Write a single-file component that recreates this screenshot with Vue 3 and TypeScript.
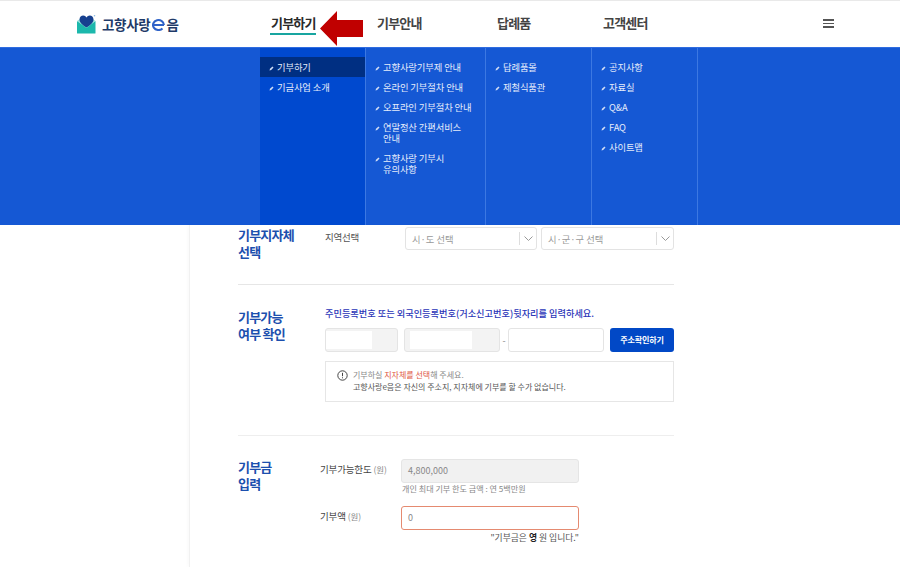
<script setup lang="ts">
const columns: { dark?: boolean; items: { label: string; active?: boolean }[] }[] = [
  { dark: true, items: [{ label: '기부하기', active: true }, { label: '기금사업 소개' }] },
  { items: [
    { label: '고향사랑기부제 안내' },
    { label: '온라인 기부절차 안내' },
    { label: '오프라인 기부절차 안내' },
    { label: '연말정산 간편서비스\n안내' },
    { label: '고향사랑 기부시\n유의사항' },
  ] },
  { items: [{ label: '답례품몰' }, { label: '제철식품관' }] },
  { items: [{ label: '공지사항' }, { label: '자료실' }, { label: 'Q&A' }, { label: 'FAQ' }, { label: '사이트맵' }] },
]
const nav = ['기부하기', '기부안내', '답례품', '고객센터']
</script>

<template>
  <div class="page">
    <header class="top">
      <a class="logo">
        <svg width="20" height="20" viewBox="0 0 20 20">
          <path d="M0 7 L9.500 13 L18.500 7 V19 Q18.500 19.500 18 19.500 H0.500 Q0 19.500 0 19 Z" fill="#1cb8ac" />
          <path d="M0 7 L3 5 H15.500 L18.500 7 L9.500 14 Z" fill="#8fe0d8" />
          <path d="M9.500 13.500 C5 10.500 2.500 8.500 2.500 5.500 C2.500 3 4.300 1.500 6.200 1.500 C7.600 1.500 8.800 2.300 9.500 3.500 C10.200 2.300 11.400 1.500 12.800 1.500 C14.700 1.500 16.500 3 16.500 5.500 C16.500 8.500 14 10.500 9.500 13.500 Z" fill="#17408f" />
          <circle cx="17.500" cy="1.800" r="0.800" fill="#8ab8e0" />
        </svg>
        <span class="logo-text">고향사랑</span>
        <svg class="logo-e" width="13" height="12" viewBox="0 0 13 12">
          <path d="M2 6 H12 M12 6 A5.500 5 0 1 0 10.500 9.500" fill="none" stroke="#2f62c8" stroke-width="2" />
        </svg>
        <span class="logo-text">음</span>
      </a>
      <span v-for="(n, i) in nav" :key="n" class="nav-cell" :class="{ first: i === 0 }">
        <span class="nav-item" :class="{ current: i === 0 }">{{ n }}</span>
      </span>
      <div class="burger-cell">
        <span class="burger"><i></i><i></i><i></i></span>
      </div>
      <svg class="arrow" width="44" height="36" viewBox="0 0 44 36">
        <path d="M0 17.500 L17 0 V9 H43 V26 H17 V35 Z" fill="#c00000" />
      </svg>
    </header>

    <nav class="mega">
      <div class="mega-spacer"></div>
      <ul v-for="(col, i) in columns" :key="i" class="mega-col" :class="{ dark: col.dark }">
        <li v-for="it in col.items" :key="it.label" class="mega-item" :class="{ active: it.active }">
          <svg class="tick" width="5" height="5" viewBox="0 0 5 5">
            <path d="M0.500 4.500 L1 2.800 L3.500 0.500 L4.500 1.500 L2.200 4 Z" fill="#cfdcf5" />
          </svg>
          <span class="mega-label">{{ it.label }}</span>
        </li>
      </ul>
      <div class="mega-spacer"></div>
    </nav>

    <main class="card">
      <section class="sec sec-region">
        <h2>기부지자체<br />선택</h2>
        <div class="sec-body region">
          <span class="region-label">지역선택</span>
          <div class="select s1">
            <span>시·도 선택</span>
            <b class="caret"><svg width="9" height="5" viewBox="0 0 9 5"><path d="M0.500 0.500 L4.500 4.500 L8.500 0.500" fill="none" stroke="#999" /></svg></b>
          </div>
          <div class="select s2">
            <span>시·군·구 선택</span>
            <b class="caret"><svg width="9" height="5" viewBox="0 0 9 5"><path d="M0.500 0.500 L4.500 4.500 L8.500 0.500" fill="none" stroke="#999" /></svg></b>
          </div>
        </div>
      </section>

      <section class="sec sec-check">
        <h2>기부가능<br />여부 확인</h2>
        <div class="sec-body">
          <p class="lead">주민등록번호 또는 외국인등록번호(거소신고번호)뒷자리를 입력하세요.</p>
          <div class="id-row">
            <div class="masked m1"><i></i></div>
            <div class="masked m2"><i></i></div>
            <span class="dash">-</span>
            <div class="plain"></div>
            <button class="confirm">주소확인하기</button>
          </div>
          <div class="note">
            <svg width="11" height="11" viewBox="0 0 11 11">
              <circle cx="5.500" cy="5.500" r="4.700" fill="none" stroke="#444" stroke-width="1" />
              <path d="M5.500 2.800 V6.200 M5.500 7.300 V8.300" stroke="#444" stroke-width="1" />
            </svg>
            <p>기부하실 <em>지자체를 선택</em>해 주세요.<br /><span>고향사랑e음은 자신의 주소지, 지자체에 기부를 할 수가 없습니다.</span></p>
          </div>
        </div>
      </section>

      <section class="sec sec-amount">
        <h2>기부금<br />입력</h2>
        <div class="amount">
          <div class="amount-row">
            <label>기부가능한도 <small>(원)</small></label>
            <div class="amount-field">
              <div class="input readonly">4,800,000</div>
              <p class="hint">개인 최대 기부 한도 금액 : 연 5백만원</p>
            </div>
          </div>
          <div class="amount-row second">
            <label>기부액 <small>(원)</small></label>
            <div class="amount-field">
              <div class="input error">0</div>
              <p class="words">"기부금은 <strong>영</strong> 원 입니다."</p>
            </div>
          </div>
        </div>
      </section>
    </main>
  </div>
</template>

<style>
html, body { margin: 0; background: #fff; overflow: hidden; }
</style>

<style scoped>
.page {
  width: 900px;
  height: 567px;
  overflow: hidden;
  font-family: "Noto Sans CJK KR", "Noto Sans", sans-serif;
  color: #333;
}
.top {
  position: relative;
  height: 46px;
  border-top: 1px solid #e9e9e9;
  display: grid;
  grid-template-columns: 260px 106px 120px 106px 106px 1fr;
  align-items: center;
  background: #fff;
}
.logo {
  display: flex;
  align-items: center;
  padding-left: 77px;
  height: 100%;
}
.logo svg:first-child { margin-right: 5px; }
.logo-text {
  font-size: 13.500px;
  font-weight: 700;
  color: #1e3a68;
  letter-spacing: -0.300px;
}
.logo-e { margin: 1px 1px 0 2px; }
.nav-cell { padding-left: 11px; height: 100%; display: flex; align-items: flex-start; }
.nav-cell.first { padding-left: 10px; }
.nav-item {
  margin-top: 13px;
  font-size: 13px;
  line-height: 18px;
  font-weight: 700;
  color: #444;
  letter-spacing: -0.800px;
  padding-bottom: 1px;
}
.nav-item.current {
  color: #2a2a2a;
  border-bottom: 2px solid #18a5a0;
  padding-left: 1px;
}
.burger-cell { padding-left: 125px; }
.burger { display: flex; flex-direction: column; gap: 2px; width: 11px; margin-top: -1px; }
.burger i { display: block; height: 1.500px; background: #555; }
.arrow { position: absolute; left: 320px; top: 10px; }

.mega {
  height: 178px;
  display: grid;
  grid-template-columns: 260px 106px 120px 106px 106px 1fr;
  background: #1558d4;
  border-top: 1px solid #2f6ce0;
  box-sizing: border-box;
}
.mega-col {
  list-style: none;
  margin: 0;
  padding: 9px 0 0;
  border-right: 1px solid #3c78e2;
  box-sizing: border-box;
}
.mega-col.dark { background: #0049cf; }
.mega-item {
  display: flex;
  align-items: flex-start;
  gap: 3px;
  padding: 4.600px 0 4.600px 9px;
  font-size: 9.300px;
  line-height: 11px;
  color: #e6edfb;
  letter-spacing: -0.100px;
}
.mega-item.active { background: #002f82; }
.mega-label { white-space: pre-line; }
.tick { flex: none; margin-top: 4px; }

.card {
  margin-left: 189px;
  width: 520px;
  height: 342px;
  border-left: 1px solid #f1f1f1;
  box-shadow: -2px 0 3px rgba(0, 0, 0, 0.020);
  padding-left: 48px;
  box-sizing: border-box;
}
.sec {
  width: 436px;
  display: flex;
  box-sizing: border-box;
}
h2 {
  margin: -1px 0 0;
  font-size: 13px;
  line-height: 17px;
  font-weight: 700;
  color: #1c4fae;
  letter-spacing: -0.800px;
  width: 87px;
  flex: none;
}
.sec-region {
  height: 60px;
  border-bottom: 1px solid #e6e6e6;
  padding-top: 2px;
}
.sec-body { flex: 1; min-width: 0; }
.region { display: flex; align-items: flex-start; }
.region-label {
  width: 80px;
  flex: none;
  font-size: 9.500px;
  line-height: 20px;
  color: #555;
  letter-spacing: -0.200px;
}
.select {
  height: 23px;
  box-sizing: border-box;
  border: 1px solid #e3e3e3;
  border-radius: 3px;
  display: flex;
  align-items: center;
  justify-content: space-between;
  font-size: 9.300px;
  color: #999;
  padding-left: 6px;
  background: #fff;
}
.s1 { width: 132px; margin-right: 4px; }
.s2 { width: 133px; }
.caret {
  width: 16px;
  height: 13px;
  border-left: 1px solid #ddd;
  display: flex;
  align-items: center;
  justify-content: center;
}
.sec-check {
  height: 151px;
  border-bottom: 1px solid #eee;
  padding-top: 24px;
}
.lead {
  margin: -3px 0 0;
  font-size: 9.200px;
  font-weight: 500;
  line-height: 14px;
  color: #2a35b8;
}
.id-row {
  display: flex;
  align-items: center;
  margin-top: 8px;
  height: 24px;
}
.masked, .plain {
  height: 24px;
  box-sizing: border-box;
  border: 1px solid #e4e4e4;
  border-radius: 3px;
}
.masked { background: #f3f3f3; position: relative; }
.masked i { display: block; background: #fff; height: 18px; margin-top: 2px; }
.m1 { width: 73px; margin-right: 6px; }
.m1 i { width: 46px; }
.m2 { width: 96px; }
.m2 i { width: 62px; margin-left: 5px; }
.dash { width: 8px; text-align: center; font-size: 9px; color: #888; }
.plain { width: 96px; margin-right: 6px; background: #fff; }
.confirm {
  width: 64px;
  height: 24px;
  border: none;
  border-radius: 3px;
  background: #0148c6;
  color: #fff;
  font: 700 8.100px/1 "Noto Sans CJK KR", sans-serif;
  letter-spacing: -0.200px;
  padding: 0;
}
.note {
  margin-top: 9px;
  height: 41px;
  box-sizing: border-box;
  border: 1px solid #e6e6e6;
  display: flex;
  align-items: flex-start;
  padding: 8px 0 0 11px;
  gap: 5px;
}
.note p {
  margin: -1px 0 0;
  font-size: 8px;
  line-height: 11.500px;
  color: #888;
}
.note em { font-style: normal; color: #e0573f; }
.note span { color: #555; }
.sec-amount { padding-top: 23px; }
.amount { flex: 1; margin-left: -5px; }
.amount-row { display: flex; align-items: flex-start; }
.amount-row.second { margin-top: 11px; }
label {
  width: 81px;
  flex: none;
  font-size: 9.500px;
  line-height: 20px;
  color: #444;
  letter-spacing: -0.150px;
}
label small { font-size: 8.500px; color: #888; }
.amount-field { width: 178px; }
.input {
  height: 24px;
  box-sizing: border-box;
  border-radius: 3px;
  font-size: 9px;
  line-height: 24px;
  padding-left: 6px;
  color: #888;
}
.readonly { background: #f1f1f1; border: 1px solid #e5e5e5; line-height: 22px; }
.error { border: 1px solid #e58a70; background: #fff; line-height: 22px; }
.hint {
  margin: 0;
  font-size: 8.100px;
  line-height: 12px;
  color: #888;
  padding-left: 1px;
}
.words {
  margin: 1px 0 0;
  font-size: 8.800px;
  line-height: 13px;
  color: #555;
  text-align: right;
}
.words strong { color: #222; }
</style>
